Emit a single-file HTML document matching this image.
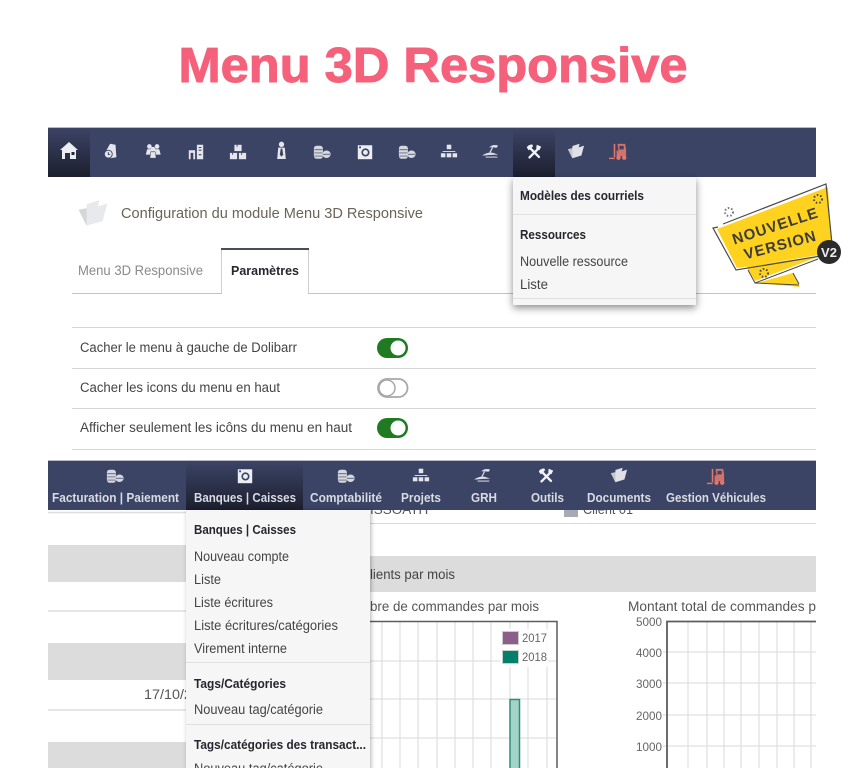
<!DOCTYPE html>
<html lang="fr"><head><meta charset="utf-8"><title>Menu 3D Responsive</title>
<style>
html,body{margin:0;padding:0;background:#fff;width:864px;height:768px;overflow:hidden}
svg#r{display:block;filter:blur(.35px)}
text{font-family:"Liberation Sans",sans-serif;font-size:13.5px;fill:#444}
.b{font-weight:bold;fill:#26262e;font-size:13px}
.n{font-weight:bold;fill:#d8dbe3;font-size:12.5px}
.g{stroke:#dadada;stroke-width:1;fill:none}
</style></head><body>
<svg id="r" width="864" height="768" viewBox="0 0 864 768" xmlns="http://www.w3.org/2000/svg">
<defs>
<linearGradient id="act" x1="0" y1="0" x2="0" y2="1"><stop offset="0" stop-color="#3c4466"/><stop offset="1" stop-color="#1c1f2e"/></linearGradient>
<symbol id="home" viewBox="0 0 20 20"><path fill="#eceef2" d="M10 1 L19 9 L17 9 L17 18 L11 18 L11 12 L6 12 L6 18 L3 18 L3 9 L1 9 Z"/><rect x="12.5" y="11" width="3" height="3" fill="#23263a"/></symbol>
<symbol id="pers" viewBox="0 0 20 20"><path fill="#e4e6ec" d="M9 2 L15 3 L16 17 L9 18 L8 12 L5 9 Z"/><circle cx="7" cy="13.5" r="4.4" fill="#e4e6ec" stroke="#3c4466"/><path d="M7 11v3h2" stroke="#3c4466" fill="none"/></symbol>
<symbol id="grp" viewBox="0 0 20 20"><g fill="#e4e6ec"><circle cx="6" cy="5" r="2.6"/><circle cx="14.5" cy="5" r="2.6"/><path d="M2 14 L3.5 8 H8 L9 14Z"/><path d="M11 14 L12 8 H17 L18.500 14Z"/><circle cx="10" cy="8" r="2.6"/><path d="M6.500 18 L7.500 11 H12.500 L13.500 18Z" stroke="#3c4466" stroke-width=".6"/></g></symbol>
<symbol id="bld" viewBox="0 0 20 20"><path fill="#e4e6ec" d="M2 8 H9 V18 H7 V11 H4 V18 H2Z M11 2 H18 V18 H11Z"/><path stroke="#3c4466" stroke-width="1.200" d="M13 5h3M13 8h3M13 13h3"/></symbol>
<symbol id="box" viewBox="0 0 20 20"><g fill="#e4e6ec"><rect x="6" y="2" width="8" height="7"/><rect x="1" y="11" width="8" height="7"/><rect x="11" y="11" width="8" height="7"/></g><path stroke="#3c4466" d="M9 2v2M4 11v2M14 11v2"/></symbol>
<symbol id="tie" viewBox="0 0 20 20"><g fill="#e4e6ec"><circle cx="10" cy="3.500" r="2.800"/><path d="M6.500 7 H13.500 L14.500 19 H5.500Z"/></g><path fill="#3c4466" d="M9.200 8h1.600l1 6.500-1.800 2-1.800-2z"/></symbol>
<symbol id="coin" viewBox="0 0 20 20"><g fill="#d5d8df"><rect x="1" y="3" width="10" height="14.500" rx="3"/><ellipse cx="15" cy="12.500" rx="4.600" ry="4.200"/></g><path stroke="#3c4466" fill="none" stroke-width=".7" d="M1.500 7.500h9M1.500 11h9M1.500 14.500h9M11 12.500h8"/></symbol>
<symbol id="safe" viewBox="0 0 20 20"><rect x="2" y="2.500" width="16" height="15.500" fill="#eceef2"/><circle cx="10.500" cy="10.500" r="3.600" fill="none" stroke="#3c4466" stroke-width="1.800"/><rect x="3.500" y="3.800" width="2" height="2" fill="#3c4466"/></symbol>
<symbol id="map" viewBox="0 0 20 20"><g fill="#e4e6ec"><rect x="7.500" y="3" width="5" height="5"/><rect x="1" y="12.500" width="5" height="4.500"/><rect x="7.500" y="12.500" width="5" height="4.500"/><rect x="14" y="12.500" width="5" height="4.500"/><rect x="3" y="10" width="14" height="1"/></g></symbol>
<symbol id="beach" viewBox="0 0 20 20"><g fill="#dcdfe6"><path d="M8 6 Q12 2 18 4 L16 6.500 Q12 5.500 8 6Z"/><path d="M11 6 L8 12 H9.500 L12.500 6Z"/><path d="M0 15 Q6 11 12 12 L18 14 L8 14.500 Q4 15 0 15Z"/><rect x="4" y="16.200" width="13" height="1.100"/></g></symbol>
<symbol id="tool" viewBox="0 0 20 20"><g stroke="#f2f3f6" fill="none" stroke-linecap="round"><path stroke-width="2.600" d="M5 16 L15 6"/><path stroke-width="2.600" d="M5 5 L15.500 15.500"/></g><path fill="#f2f3f6" d="M2 5 Q3 2 8 1.500 L9 3.500 L6 7 L4 8Z M13 2 L18 4 L16 8 L12.500 6Z"/></symbol>
<symbol id="fold" viewBox="0 0 20 20"><path fill="#dfe1e6" d="M1 8 L6 18 L16 15 L19 4 L13 6 L14 2 L6 4.500 L6 7Z"/><path fill="#c3c6cd" d="M1 8 L6 7 L6 18Z"/></symbol>
<symbol id="fork" viewBox="0 0 20 20"><g fill="#e2786c"><path d="M9 2 H17 L18 8 V15 H8 V9 H10Z" fill-opacity=".9"/><rect x="5" y="2" width="1.600" height="14"/><rect x="0" y="16.500" width="6" height="1.500"/><circle cx="10" cy="16.500" r="2.300"/><circle cx="16" cy="16.500" r="2.300"/></g><rect x="11" y="4" width="4.500" height="3.800" fill="#3c4466"/></symbol>
</defs>

<rect width="864" height="768" fill="#fff"/>
<text x="178.500" y="82" style="font-size:49.500px;font-weight:bold;fill:#f5607a;stroke:#f5607a;stroke-width:1px;stroke-linejoin:round" textLength="509" lengthAdjust="spacingAndGlyphs">Menu 3D Responsive</text>

<!-- top nav -->
<rect x="48" y="127" width="768" height="1.500" fill="#b8bac2"/>
<rect x="48" y="128" width="768" height="49" fill="#3c4466"/>
<rect x="48" y="128" width="42" height="49" fill="url(#act)"/>
<rect x="513" y="128" width="42" height="49" fill="url(#act)"/>
<use href="#home" x="59" y="141" width="20" height="20"/>
<use href="#pers" x="102" y="142" width="18" height="18"/>
<use href="#grp" x="144" y="142" width="18" height="18"/>
<use href="#bld" x="187" y="143" width="18" height="18"/>
<use href="#box" x="229" y="143" width="18" height="18"/>
<use href="#tie" x="272" y="141" width="19" height="19"/>
<use href="#coin" x="313" y="143" width="18" height="18"/>
<use href="#safe" x="356" y="143" width="18" height="18"/>
<use href="#coin" x="398" y="143" width="18" height="18"/>
<use href="#map" x="440" y="142" width="18" height="18"/>
<use href="#beach" x="482" y="142" width="18" height="18"/>
<use href="#tool" x="525" y="143" width="18" height="18"/>
<use href="#fold" x="567" y="142" width="18" height="18"/>
<use href="#fork" x="609" y="142" width="19" height="19"/>

<!-- config header -->
<use href="#fold" x="77" y="197" width="32" height="32" style="opacity:.7"/>
<text x="121" y="218" textLength="302" lengthAdjust="spacingAndGlyphs" style="font-size:14.500px;fill:#6a6458">Configuration du module Menu 3D Responsive</text>
<!-- tabs -->
<path d="M72 293.500H816" stroke="#c4c4c4"/>
<text x="78" y="275" textLength="125" lengthAdjust="spacingAndGlyphs" style="fill:#8a8a8a">Menu 3D Responsive</text>
<path d="M221.500 293V249.500H308.500V293" fill="#fff" stroke="#cfcfcf"/>
<rect x="221" y="248" width="88" height="2" fill="#4a4e5a"/>
<path d="M222 293.500H308" stroke="#fff" stroke-width="1.500"/>
<text class="b" x="231" y="275" textLength="68" lengthAdjust="spacingAndGlyphs">Paramètres</text>

<!-- settings -->
<g stroke="#d6d6d6"><path d="M72 327.500H816M72 368.500H816M72 408.500H816M72 449.500H816"/></g>
<text x="80" y="352" textLength="217" lengthAdjust="spacingAndGlyphs">Cacher le menu à gauche de Dolibarr</text>
<text x="80" y="392" textLength="200" lengthAdjust="spacingAndGlyphs">Cacher les icons du menu en haut</text>
<text x="80" y="432" textLength="272" lengthAdjust="spacingAndGlyphs">Afficher seulement les icôns du menu en haut</text>
<rect x="377" y="338" width="31" height="20" rx="10" fill="#1f7a22"/><circle cx="398" cy="348" r="7.500" fill="#fff"/>
<rect x="378" y="379" width="29.500" height="18" rx="9" fill="#fff" stroke="#a8a8a8" stroke-width="1.800"/><circle cx="387" cy="388" r="8" fill="#fff" stroke="#a8a8a8" stroke-width="1.500"/>
<rect x="377" y="418" width="31" height="20" rx="10" fill="#1f7a22"/><circle cx="398" cy="428" r="7.500" fill="#fff"/>

<!-- dropdown 1 -->
<rect x="513" y="177" width="183" height="128" fill="#f6f6f6" style="filter:drop-shadow(0 3px 4px rgba(0,0,0,.45))"/>
<path d="M513 214.500H696M513 298.500H696" stroke="#e0e0e0"/>
<text class="b" x="520" y="200" textLength="124" lengthAdjust="spacingAndGlyphs">Modèles des courriels</text>
<text class="b" x="520" y="239" textLength="66" lengthAdjust="spacingAndGlyphs">Ressources</text>
<text x="520" y="266" textLength="108" lengthAdjust="spacingAndGlyphs">Nouvelle ressource</text>
<text x="520" y="289" textLength="28" lengthAdjust="spacingAndGlyphs">Liste</text>

<!-- banner -->
<path d="M746 266 L755 281 L820 256Z" fill="#ffd21f"/>
<path d="M757 283 L793 273 L800 287Z" fill="#ffd21f"/>
<path d="M748 270 L755 283 L818 259 M755 283 L799 285 M793 273 L799 284" fill="none" stroke="#4a4a4a" stroke-width="1"/>
<path d="M717 229 L828 187 L832 253 L737 268Z" fill="#ffd21f"/>
<path d="M723 224 L826 184 L833 254 L736 270 L713 228 L718 227" fill="none" stroke="#4a4a4a" stroke-width="1.200"/>
<g transform="rotate(-18 775 225)"><text x="775" y="231" text-anchor="middle" style="font-size:15px;font-weight:bold;fill:#3c3c3c;letter-spacing:1px">NOUVELLE</text></g>
<g transform="rotate(-15 780 244)"><text x="780" y="250" text-anchor="middle" style="font-size:15px;font-weight:bold;fill:#3c3c3c;letter-spacing:1px">VERSION</text></g>
<circle cx="829" cy="252" r="12" fill="#2b2b2b"/>
<text x="829" y="257" text-anchor="middle" style="font-size:13px;font-weight:bold;fill:#eee">V2</text>
<g fill="none" stroke-width="2" stroke-dasharray="1.500 2"><circle cx="729" cy="212" r="4" stroke="#777"/><circle cx="818" cy="199" r="4" stroke="#444"/><circle cx="764" cy="273" r="4" stroke="#444"/></g>

<!-- lower content -->
<g>
<rect x="48" y="545" width="140" height="37" fill="#dcdcdc"/>
<rect x="48" y="643" width="140" height="37" fill="#dcdcdc"/>
<rect x="48" y="742" width="140" height="26" fill="#dcdcdc"/>
<path d="M48 512.500H188M48 611H188M48 710H188" stroke="#dedede" stroke-width="1.500"/>
<text x="144" y="699" style="font-size:14px;fill:#555" textLength="72" lengthAdjust="spacingAndGlyphs">17/10/2018</text>
<path d="M370 523.500H816" stroke="#d8d8d8"/>
<text x="370" y="514" style="fill:#555">ISSOATH</text>
<rect x="564" y="506" width="14" height="11" fill="#a6aab6"/>
<text x="583" y="514" style="fill:#555" textLength="50" lengthAdjust="spacingAndGlyphs">Client 01</text>
<rect x="370" y="556" width="446" height="36" fill="#dcdcdc"/>
<text x="370" y="579" style="fill:#444" textLength="85" lengthAdjust="spacingAndGlyphs">lients par mois</text>
<text x="370" y="611" style="fill:#555" textLength="169" lengthAdjust="spacingAndGlyphs">bre de commandes par mois</text>
<text x="628" y="611" style="fill:#555" textLength="188" lengthAdjust="spacingAndGlyphs">Montant total de commandes p</text>

<!-- chart 1 -->
<path class="g" d="M382 621V768M400 621V768M418 621V768M437 621V768M455 621V768M473 621V768M491 621V768M510 621V768M528 621V768M547 621V768M370 661H556M370 699H556M370 738H556"/>
<path d="M370 621.500H557V768" fill="none" stroke="#5c5c5c" stroke-width="1.500"/>
<rect x="500" y="629" width="48" height="38" fill="#fff" fill-opacity=".85"/>
<rect x="502.500" y="631.500" width="16" height="13" fill="#8b5e8b" stroke="#ccc"/>
<rect x="502.500" y="650.500" width="16" height="13" fill="#00806a" stroke="#ccc"/>
<text x="522" y="642" style="font-size:11.500px;fill:#666" textLength="25" lengthAdjust="spacingAndGlyphs">2017</text>
<text x="522" y="661" style="font-size:11.500px;fill:#666" textLength="25" lengthAdjust="spacingAndGlyphs">2018</text>
<rect x="510" y="699.500" width="9.500" height="75" fill="#a3d3c9" stroke="#2f8f7a" stroke-width="1.500"/>

<!-- chart 2 -->
<path class="g" d="M688 621V768M707 621V768M724 621V768M741 621V768M759 621V768M777 621V768M794 621V768M811 621V768M663 652H816M663 683H816M663 715H816M663 746H816"/>
<path d="M667 768V621.500H816" fill="none" stroke="#5c5c5c" stroke-width="1.800"/>
<g>
<text x="636" y="626" style="font-size:12px;fill:#666" textLength="26" lengthAdjust="spacingAndGlyphs">5000</text>
<text x="636" y="657" style="font-size:12px;fill:#666" textLength="26" lengthAdjust="spacingAndGlyphs">4000</text>
<text x="636" y="688" style="font-size:12px;fill:#666" textLength="26" lengthAdjust="spacingAndGlyphs">3000</text>
<text x="636" y="720" style="font-size:12px;fill:#666" textLength="26" lengthAdjust="spacingAndGlyphs">2000</text>
<text x="636" y="751" style="font-size:12px;fill:#666" textLength="26" lengthAdjust="spacingAndGlyphs">1000</text>
</g>
</g>

<!-- lower nav -->
<rect x="48" y="460" width="768" height="1.500" fill="#b8bac2"/>
<rect x="48" y="461" width="768" height="49" fill="#3c4466"/>
<rect x="186" y="461" width="117" height="49" fill="url(#act)"/>
<use href="#coin" x="106" y="467" width="18" height="18"/>
<use href="#safe" x="236" y="467" width="18" height="18"/>
<use href="#coin" x="337" y="467" width="18" height="18"/>
<use href="#map" x="412" y="466" width="18" height="18"/>
<use href="#beach" x="474" y="466" width="18" height="18"/>
<use href="#tool" x="537" y="467" width="18" height="18"/>
<use href="#fold" x="610" y="466" width="18" height="18"/>
<use href="#fork" x="707" y="467" width="19" height="19"/>
<text class="n" x="52" y="502" textLength="127" lengthAdjust="spacingAndGlyphs">Facturation | Paiement</text>
<text class="n" x="194" y="502" textLength="102" lengthAdjust="spacingAndGlyphs">Banques | Caisses</text>
<text class="n" x="310" y="502" textLength="72" lengthAdjust="spacingAndGlyphs">Comptabilité</text>
<text class="n" x="401" y="502" textLength="40" lengthAdjust="spacingAndGlyphs">Projets</text>
<text class="n" x="471" y="502" textLength="26" lengthAdjust="spacingAndGlyphs">GRH</text>
<text class="n" x="531" y="502" textLength="33" lengthAdjust="spacingAndGlyphs">Outils</text>
<text class="n" x="587" y="502" textLength="64" lengthAdjust="spacingAndGlyphs">Documents</text>
<text class="n" x="666" y="502" textLength="100" lengthAdjust="spacingAndGlyphs">Gestion Véhicules</text>

<!-- dropdown 2 -->
<rect x="186" y="510" width="184" height="270" fill="#f6f6f6" style="filter:drop-shadow(1px 0 2px rgba(0,0,0,.3))"/>
<path d="M186 662.500H370M186 724.500H370" stroke="#e0e0e0"/>
<text class="b" x="194" y="534" textLength="102" lengthAdjust="spacingAndGlyphs">Banques | Caisses</text>
<text x="194" y="561" textLength="95" lengthAdjust="spacingAndGlyphs">Nouveau compte</text>
<text x="194" y="584" textLength="27" lengthAdjust="spacingAndGlyphs">Liste</text>
<text x="194" y="607" textLength="79" lengthAdjust="spacingAndGlyphs">Liste écritures</text>
<text x="194" y="630" textLength="144" lengthAdjust="spacingAndGlyphs">Liste écritures/catégories</text>
<text x="194" y="653" textLength="93" lengthAdjust="spacingAndGlyphs">Virement interne</text>
<text class="b" x="194" y="688" textLength="92" lengthAdjust="spacingAndGlyphs">Tags/Catégories</text>
<text x="194" y="714" textLength="129" lengthAdjust="spacingAndGlyphs">Nouveau tag/catégorie</text>
<text class="b" x="194" y="749" textLength="172" lengthAdjust="spacingAndGlyphs">Tags/catégories des transact...</text>
<text x="194" y="773" textLength="129" lengthAdjust="spacingAndGlyphs">Nouveau tag/catégorie</text>
</svg>
</body></html>
